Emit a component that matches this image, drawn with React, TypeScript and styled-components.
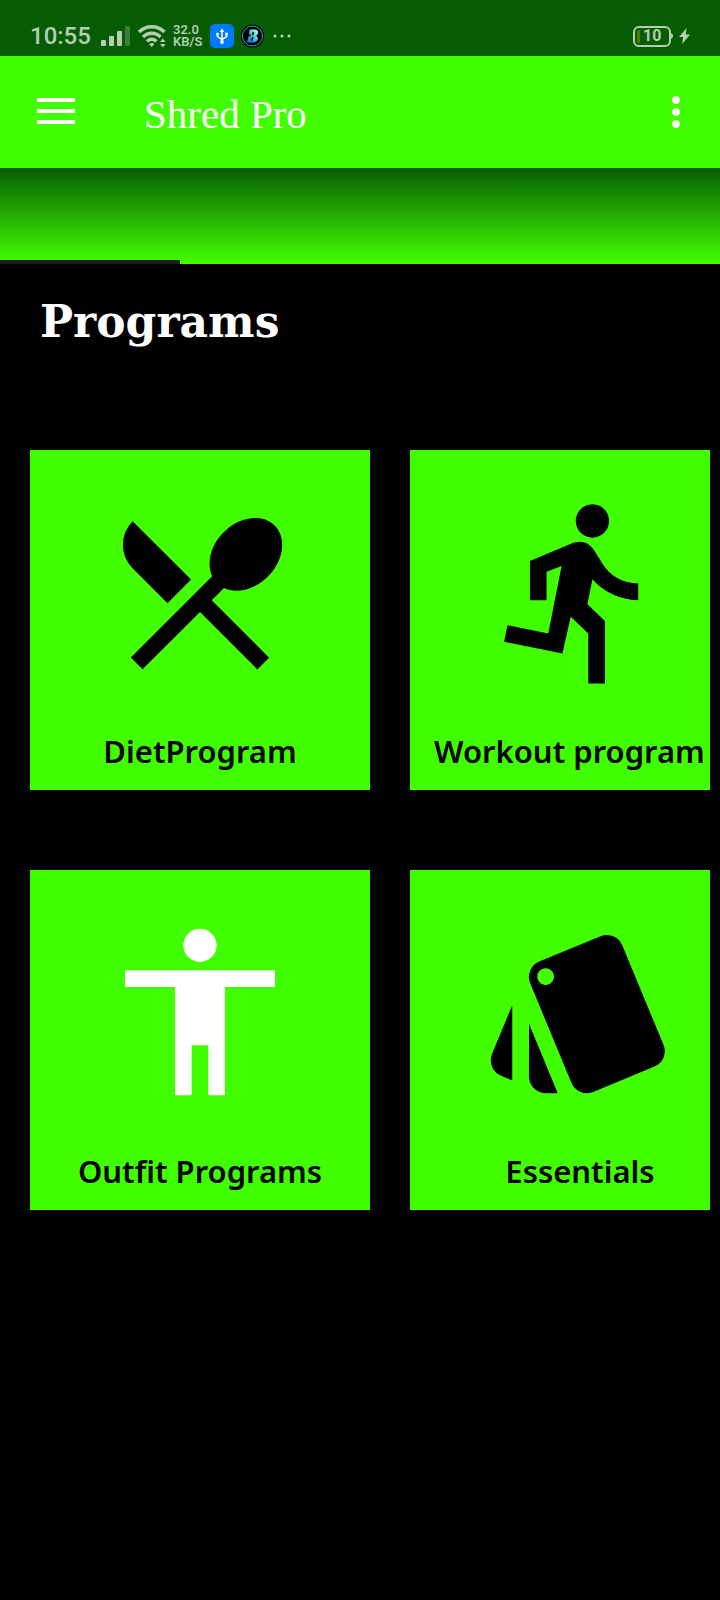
import React from "react";
import styled, { createGlobalStyle } from "styled-components";
import {
  MdAccessibility,
  MdDirectionsRun,
  MdMoreVert,
  MdRestaurantMenu,
  MdStyle,
} from "react-icons/md";

const colors = {
  lime: "#42ff00",
  forest: "#065c03",
  status: "#b4ceb3",
  black: "#000000",
  white: "#ffffff",
};

const GlobalStyle = createGlobalStyle`
  * { box-sizing: border-box; }
  body {
    margin: 0;
    background: ${colors.black};
    font-family: Roboto, "Liberation Sans", sans-serif;
  }
  button, a { color: inherit; font: inherit; }
`;

const Page = styled.div`
  min-height: 100vh;
  background: ${colors.black};
`;

const StatusBar = styled.div`
  display: flex;
  justify-content: space-between;
  align-items: center;
  height: 56px;
  padding: 16px 30px 0;
  background: ${colors.forest};
  color: ${colors.status};
`;

const StatusGroup = styled.div<{ $gap: number }>`
  display: flex;
  align-items: center;
  gap: ${(p) => p.$gap}px;
`;

const Clock = styled.time`
  width: 64px;
  font-size: 24px;
  line-height: 24px;
  font-weight: 500;
`;

const NetSpeed = styled.span`
  display: flex;
  flex-direction: column;
  width: 30px;
  font-size: 13px;
  line-height: 12px;
  font-weight: 600;
  white-space: nowrap;
`;

const Battery = styled.span`
  display: flex;
  align-items: center;
  width: 38px;
  height: 21px;
  padding-left: 2px;
  gap: 3px;
  border: 2px solid ${colors.status};
  border-radius: 6px;
  font-size: 16px;
  line-height: 16px;
  font-weight: 700;
`;

const Charge = styled.i`
  width: 3px;
  height: 13px;
  border-radius: 1px;
  background: #4d7c02;
`;

const AppBar = styled.header`
  display: flex;
  align-items: center;
  height: 112px;
  padding: 0 20px 0 32px;
  background: ${colors.lime};
  color: ${colors.white};
`;

const IconButton = styled.button`
  display: flex;
  align-items: center;
  justify-content: center;
  width: 48px;
  height: 48px;
  padding: 0;
  border: 0;
  background: none;
`;

const Title = styled.h1`
  flex: 1;
  margin: 0;
  padding: 4px 0 0 64px;
  font-family: "Liberation Serif", serif;
  font-size: 41px;
  line-height: 48px;
  font-weight: 400;
`;

const TabStrip = styled.div`
  display: flex;
  align-items: flex-end;
  height: 96px;
  background: linear-gradient(${colors.forest}, ${colors.lime});
`;

const TabIndicator = styled.div`
  width: 25%;
  height: 4px;
  background: #1c1c1c;
`;

const Heading = styled.h2`
  margin: 0;
  padding: 30px 40px 0;
  color: ${colors.white};
  font-family: "DejaVu Serif", serif;
  font-size: 44px;
  line-height: 56px;
  font-weight: 700;
`;

const Programs = styled.main`
  display: grid;
  grid-template-columns: 340px 340px;
  gap: 80px 40px;
  margin: 100px 10px 0 0;
  padding-left: 30px;
  overflow: hidden;
`;

const Card = styled.a<{ $tone: string }>`
  display: flex;
  flex-direction: column;
  align-items: center;
  height: 340px;
  padding: 42px 24px 0;
  gap: 39px;
  background: ${colors.lime};
  color: ${colors.black};
  text-decoration: none;

  svg {
    flex: none;
    color: ${(p) => p.$tone};
  }
`;

const CardLabel = styled.span<{ $align: "center" | "flex-start" }>`
  align-self: ${(p) => p.$align};
  font-family: "Noto Sans", sans-serif;
  font-size: 31px;
  line-height: 40px;
  font-weight: 600;
  white-space: nowrap;
`;

const SignalIcon = () => (
  <svg width="29" height="22" viewBox="0 0 29 22" fill="currentColor" aria-hidden="true">
    <rect x="0" y="15" width="5" height="6" rx="1" />
    <rect x="8" y="11" width="5" height="10" rx="1" />
    <rect x="16" y="6" width="5" height="15" rx="1" />
    <rect x="24" y="1" width="5" height="20" rx="1" opacity="0.3" />
  </svg>
);

const WifiIcon = () => (
  <svg width="29" height="24" viewBox="0 0 29 24" aria-hidden="true">
    <g fill="none" stroke="currentColor" strokeWidth="3.4">
      <path d="M2 8C9 1 20.500 1 27.500 8" />
      <path d="M6 13C11 8 18.500 8 23.500 13" />
      <path d="M10 17.400C12.500 14.600 17 14.600 19.500 17.400" />
    </g>
    <path d="M12 20q3-2 5.500 0l-2.700 3zM23 18l2.800-3.500 2.800 3.500zM23 20l2.800 3.500 2.800-3.500z" fill="currentColor" />
  </svg>
);

const UsbIcon = () => (
  <svg width="24" height="24" viewBox="0 0 24 24" aria-hidden="true">
    <rect width="24" height="24" rx="5" fill="#007bff" />
    <g fill="none" stroke="#fff" strokeWidth="1.500">
      <path d="M12 7v10M7.500 10.500v2l4.500 3 4.500-3v-2" />
    </g>
    <path d="M12 4.500l2.300 3.500H9.700z" fill="#fff" />
    <circle cx="12" cy="18" r="1.900" fill="#fff" />
    <circle cx="7.500" cy="10" r="1.500" fill="#fff" />
    <rect x="15.200" y="8.700" width="2.700" height="2.700" fill="#fff" />
  </svg>
);

const BadgeIcon = () => (
  <svg width="24" height="24" viewBox="0 0 24 24" aria-hidden="true">
    <defs>
      <linearGradient id="badge" x1="0" y1="1" x2="1" y2="0">
        <stop offset="0.200" stopColor="#1583e8" />
        <stop offset="0.800" stopColor="#83f5d4" />
      </linearGradient>
    </defs>
    <circle cx="11.500" cy="12" r="11.500" fill="#000" />
    <circle cx="11.500" cy="12" r="10" fill="none" stroke="#4d9fc6" strokeWidth="1" />
    <path d="M8.500 5.500h5.500c4 0 4 5 1 6.200 3.500 1.500 1.500 6.800-2.500 6.800H6l1.500-6 3-1-2.500-1.500z" fill="url(#badge)" />
    <path d="M12.500 8l-.8 3M11.800 13l-1 3.500" stroke="#000" strokeWidth="1.500" />
  </svg>
);

const DotsIcon = () => (
  <svg width="20" height="4" viewBox="0 0 20 4" fill="currentColor" aria-hidden="true">
    <circle cx="3" cy="2" r="1.600" />
    <circle cx="10" cy="2" r="1.600" />
    <circle cx="17" cy="2" r="1.600" />
  </svg>
);

const BatteryTip = () => (
  <svg width="2" height="6" viewBox="0 0 2 6" fill="currentColor" aria-hidden="true">
    <path d="M0 0l2 2v2L0 6z" />
  </svg>
);

const BoltIcon = () => (
  <svg width="11" height="16" viewBox="0 0 11 16" fill="currentColor" aria-hidden="true">
    <path d="M7.500 0L0 9h4L3.300 16 11 6.500H6.800z" />
  </svg>
);

const MenuIcon = () => (
  <svg width="38" height="28" viewBox="0 0 38 28" fill="currentColor" aria-hidden="true">
    <rect width="38" height="4" />
    <rect y="11" width="38" height="4" />
    <rect y="22" width="38" height="4" />
  </svg>
);

const programs = [
  { label: "DietProgram", Icon: MdRestaurantMenu, tone: colors.black, align: "center" },
  { label: "Workout program", Icon: MdDirectionsRun, tone: colors.black, align: "flex-start" },
  { label: "Outfit Programs", Icon: MdAccessibility, tone: colors.white, align: "center" },
  { label: "Essentials", Icon: MdStyle, tone: colors.black, align: "center" },
] as const;

export default function App() {
  return (
    <Page>
      <GlobalStyle />
      <StatusBar>
        <StatusGroup $gap={7}>
          <Clock>10:55</Clock>
          <SignalIcon />
          <WifiIcon />
          <NetSpeed>
            <span>32.0</span>
            <span>KB/S</span>
          </NetSpeed>
          <UsbIcon />
          <BadgeIcon />
          <DotsIcon />
        </StatusGroup>
        <StatusGroup $gap={0}>
          <Battery>
            <Charge />
            10
          </Battery>
          <StatusGroup $gap={6}>
            <BatteryTip />
            <BoltIcon />
          </StatusGroup>
        </StatusGroup>
      </StatusBar>
      <AppBar>
        <IconButton type="button" aria-label="Open menu">
          <MenuIcon />
        </IconButton>
        <Title>Shred Pro</Title>
        <IconButton type="button" aria-label="More options">
          <MdMoreVert size={48} />
        </IconButton>
      </AppBar>
      <TabStrip>
        <TabIndicator />
      </TabStrip>
      <Heading>Programs</Heading>
      <Programs>
        {programs.map(({ label, Icon, tone, align }) => (
          <Card key={label} href="#" $tone={tone}>
            <Icon size={200} aria-hidden="true" />
            <CardLabel $align={align}>{label}</CardLabel>
          </Card>
        ))}
      </Programs>
    </Page>
  );
}
